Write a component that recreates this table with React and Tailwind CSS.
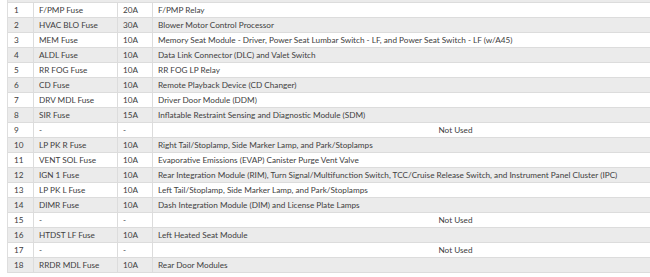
import React from "react";

const rows = [
  ["1", "F/PMP Fuse", "20A", "F/PMP Relay"],
  ["2", "HVAC BLO Fuse", "30A", "Blower Motor Control Processor"],
  ["3", "MEM Fuse", "10A", "Memory Seat Module - Driver, Power Seat Lumbar Switch - LF, and Power Seat Switch - LF (w/A45)"],
  ["4", "ALDL Fuse", "10A", "Data Link Connector (DLC) and Valet Switch"],
  ["5", "RR FOG Fuse", "10A", "RR FOG LP Relay"],
  ["6", "CD Fuse", "10A", "Remote Playback Device (CD Changer)"],
  ["7", "DRV MDL Fuse", "10A", "Driver Door Module (DDM)"],
  ["8", "SIR Fuse", "15A", "Inflatable Restraint Sensing and Diagnostic Module (SDM)"],
  ["9", "-", "-", null],
  ["10", "LP PK R Fuse", "10A", "Right Tail/Stoplamp, Side Marker Lamp, and Park/Stoplamps"],
  ["11", "VENT SOL Fuse", "10A", "Evaporative Emissions (EVAP) Canister Purge Vent Valve"],
  ["12", "IGN 1 Fuse", "10A", "Rear Integration Module (RIM), Turn Signal/Multifunction Switch, TCC/Cruise Release Switch, and Instrument Panel Cluster (IPC)"],
  ["13", "LP PK L Fuse", "10A", "Left Tail/Stoplamp, Side Marker Lamp, and Park/Stoplamps"],
  ["14", "DIMR Fuse", "10A", "Dash Integration Module (DIM) and License Plate Lamps"],
  ["15", "-", "-", null],
  ["16", "HTDST LF Fuse", "10A", "Left Heated Seat Module"],
  ["17", "-", "-", null],
  ["18", "RRDR MDL Fuse", "10A", "Rear Door Modules"],
];

export default function App() {
  return (
    <div
      className="w-[650px] h-[277px] overflow-hidden bg-white pl-[7px] text-[8.2px] text-[#404040]"
      style={{ fontFamily: 'Lato, "Liberation Sans", Arial, sans-serif' }}
    >
      <div className="w-[751px] border-l border-[#dedede]">
        <div className="h-[3px] bg-[#ebebeb] border-b border-[#dcdcdc]" />
        {rows.map((r, i) => (
          <div
            key={i}
            className={`flex h-[15px] items-center border-b border-[#dcdcdc] ${i % 2 === 1 ? "bg-[#ebebeb]" : "bg-white"}`}
          >
            <div className="w-[26px] h-full flex items-center pl-[6px] border-r border-[#dcdcdc]">{r[0]}</div>
            <div className="w-[84px] h-full flex items-center pl-[5px] border-r border-[#dcdcdc]">{r[1]}</div>
            <div className="w-[35px] h-full flex items-center pl-[5px] border-r border-[#dcdcdc]">{r[2]}</div>
            {r[3] === null ? (
              <div className="flex-1 h-full flex items-center justify-center">Not Used</div>
            ) : (
              <div className="flex-1 h-full flex items-center pl-[5px] whitespace-nowrap">{r[3]}</div>
            )}
          </div>
        ))}
      </div>
    </div>
  );
}
